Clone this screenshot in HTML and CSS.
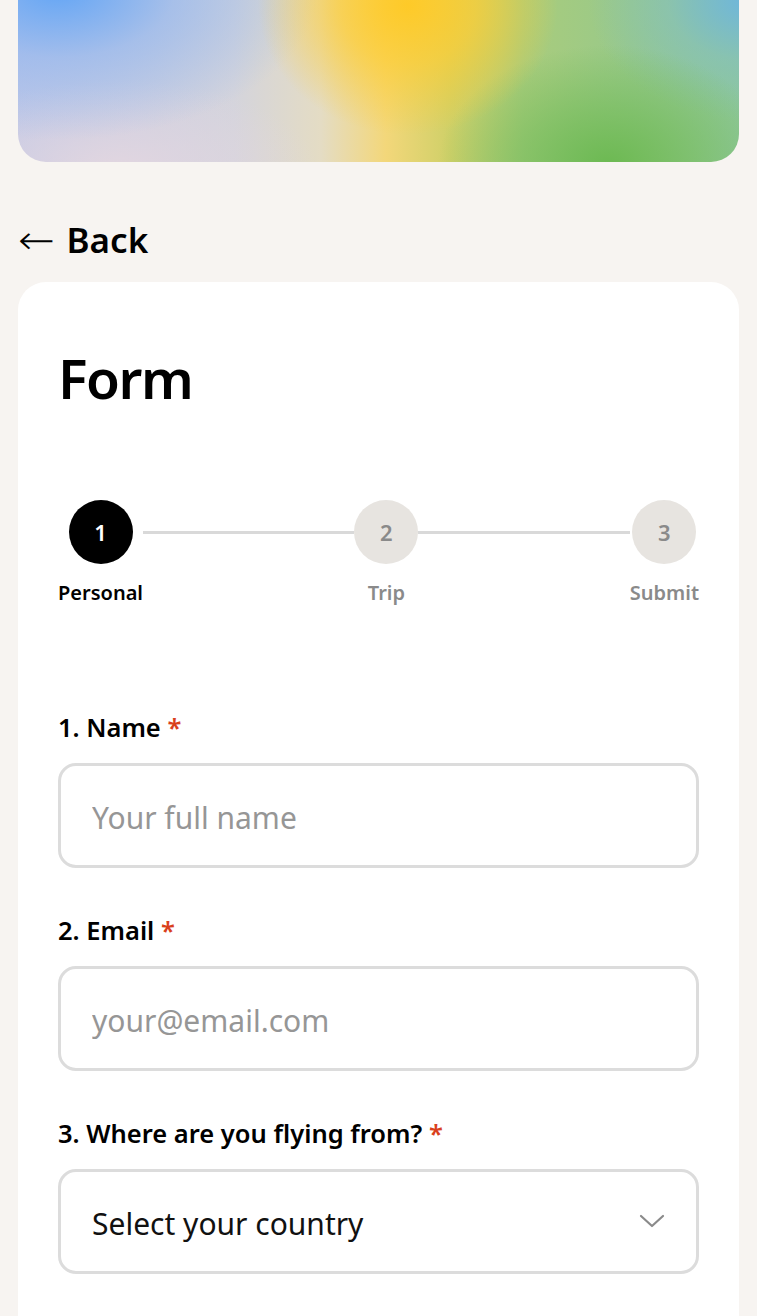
FILE: index.html
```html
<!DOCTYPE html>
<html lang="en">
<head>
<meta charset="utf-8">
<title>Form</title>
<link rel="stylesheet" href="styles.css">
</head>
<body>
<div class="page">
  <div class="hero"></div>
  <a class="back" href="#"><span class="arrow">←</span><span>Back</span></a>
  <main class="card">
    <h1 class="title">Form</h1>
    <div class="stepper">
      <div class="step active">
        <div class="circle">1</div>
        <div class="step-label">Personal</div>
      </div>
      <div class="line"></div>
      <div class="step">
        <div class="circle">2</div>
        <div class="step-label">Trip</div>
      </div>
      <div class="line"></div>
      <div class="step">
        <div class="circle">3</div>
        <div class="step-label">Submit</div>
      </div>
    </div>
    <div class="field first">
      <label class="label">1. Name <span class="req">*</span></label>
      <input class="input" type="text" placeholder="Your full name">
    </div>
    <div class="field">
      <label class="label">2. Email <span class="req">*</span></label>
      <input class="input" type="email" placeholder="your@email.com">
    </div>
    <div class="field">
      <label class="label">3. Where are you flying from? <span class="req">*</span></label>
      <div class="select-wrap">
        <select class="input select">
          <option>Select your country</option>
        </select>
        <svg class="chevron" width="26" height="14" viewBox="0 0 26 14" fill="none" stroke="#8a8a8a" stroke-width="2.2" stroke-linecap="round" stroke-linejoin="round"><path d="M2 2 L13 12 L24 2"/></svg>
      </div>
    </div>
  </main>
</div>
</body>
</html>
```

FILE: styles.css
```css
* { box-sizing: border-box; }
html, body {
  margin: 0;
  padding: 0;
  background: #f7f4f1;
}
body {
  font-family: "Noto Sans", "Open Sans", sans-serif;
  color: #000;
  overflow: hidden;
}
.page {
  padding: 0 18px;
  display: flex;
  flex-direction: column;
}
.hero {
  height: 162px;
  border-radius: 0 0 28px 28px;
  background:
    radial-gradient(ellipse 150px 130px at 390px 5px, rgba(254,202,40,1) 0%, rgba(254,205,50,0.7) 45%, rgba(254,205,60,0) 100%),
    radial-gradient(ellipse 170px 120px at 590px 165px, rgba(108,185,82,1) 0%, rgba(115,188,90,0.6) 50%, rgba(115,188,90,0) 100%),
    radial-gradient(ellipse 260px 150px at 40px -10px, rgba(100,166,245,1) 0%, rgba(140,180,240,0.6) 45%, rgba(170,185,230,0) 100%),
    radial-gradient(ellipse 160px 120px at 730px 0px, rgba(110,182,220,1) 0%, rgba(130,190,200,0.5) 50%, rgba(130,190,200,0) 100%),
    radial-gradient(ellipse 200px 90px at 100px 170px, rgba(226,214,224,1) 0%, rgba(226,214,224,0) 100%),
    linear-gradient(90deg, #c3c9e6 0%, #d4d4dc 30%, #e4dcc4 42%, #f3d77a 51%, #cfd068 60%, #a9cc7c 70%, #98c98a 85%, #8ec79a 100%);
}
.back {
  display: flex;
  align-items: center;
  gap: 15px;
  margin: 56px 0 20px;
  height: 44px;
  color: #000;
  text-decoration: none;
  font-size: 35px;
  font-weight: 600;
  line-height: 44px;
}
.arrow {
  font-family: "DejaVu Sans", sans-serif;
  font-weight: 300;
  font-size: 40px;
  transform: scaleX(1.1);
  transform-origin: left center;
}
.card {
  background: #fff;
  border-radius: 28px 28px 0 0;
  padding: 60px 40px 80px;
  display: flex;
  flex-direction: column;
}
.title {
  margin: 0;
  font-size: 55px;
  line-height: 72px;
  font-weight: 600;
  letter-spacing: -1.5px;
}
.stepper {
  margin-top: 86px;
  display: flex;
  align-items: flex-start;
}
.step {
  display: flex;
  flex-direction: column;
  align-items: center;
}
.circle {
  width: 64px;
  height: 64px;
  border-radius: 50%;
  background: #e7e4e0;
  color: #8a8a8a;
  display: flex;
  align-items: center;
  justify-content: center;
  font-size: 22px;
  font-weight: 600;
}
.step.active .circle {
  background: #000;
  color: #fff;
}
.step-label {
  margin-top: 15px;
  font-size: 20px;
  line-height: 28px;
  font-weight: 600;
  color: #8a8a8a;
}
.step.active .step-label { color: #000; }
.line {
  flex: 1;
  height: 3px;
  margin-top: 31px;
  background: #d9d9d9;
}
.field {
  margin-top: 48px;
  display: flex;
  flex-direction: column;
}
.field.first { margin-top: 106px; }
.label {
  font-size: 25.5px;
  line-height: 28px;
  font-weight: 600;
  margin-bottom: 22px;
}
.req { color: #d9401c; }
.input {
  width: 100%;
  height: 105px;
  border: 3px solid #dcdcdc;
  border-radius: 18px;
  padding: 4px 30px 0 31px;
  font-family: inherit;
  font-size: 30px;
  color: #111;
  background: #fff;
  outline: none;
}
.input::placeholder { color: #969696; }
.select-wrap {
  position: relative;
}
.select {
  appearance: none;
  -webkit-appearance: none;
}
.chevron {
  position: absolute;
  right: 34px;
  top: 45px;
  pointer-events: none;
}
```
